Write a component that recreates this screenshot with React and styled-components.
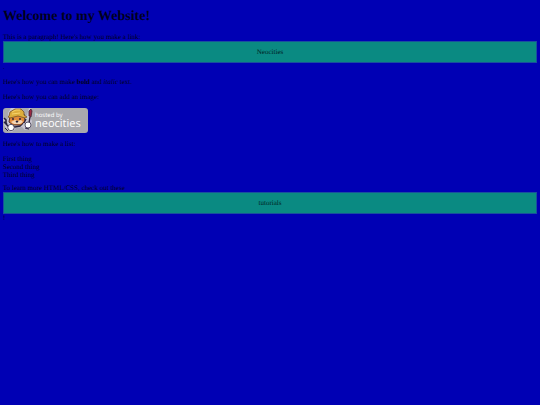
import React from "react";
import styled, { createGlobalStyle } from "styled-components";

const GlobalStyle = createGlobalStyle`
  body {
    margin: 0;
    background: #0000b4;
    color: #00001c;
    font: 7px/8px "Liberation Serif", "Times New Roman", serif;
    text-rendering: geometricPrecision;
  }
`;

const Page = styled.main`
  padding: 9px 3px;
`;

const Title = styled.h1`
  margin: 0 0 8px;
  font-size: 14px;
  line-height: 16px;
`;

const Paragraph = styled.p`
  margin: 0 0 7px;
`;

const BarLink = styled.a`
  display: block;
  box-sizing: border-box;
  padding: 6px;
  border: 1px solid #18509c;
  background: #0a8a82;
  color: #002426;
  line-height: 8px;
  text-align: center;
  text-decoration: none;
`;

const List = styled.ul`
  margin: 0 0 5px;
  padding: 0;
  list-style: none;
`;

const Badge = styled.svg`
  display: block;
  width: 85px;
  height: 25px;
  margin-bottom: 7px;
`;

const BadgeText = styled.text`
  fill: #fff;
  font-family: "Open Sans", "Noto Sans", sans-serif;
  font-size: ${({ $size }) => $size}px;
`;

function NeocitiesBadge() {
  return (
    <Badge viewBox="0 0 85 25" role="img" aria-label="Hosted by Neocities">
      <rect width="85" height="25" rx="3" fill="#a9a9ae" />
      <path d="M1 9 0 12l2 3-1 2 4 6 4 1 4-4 6-1 3 3 6-3 1-6-2-4 2-8-3-1-2 7-3 4 0-6-4-5-9 0-3 5 0 6-3 2Z" fill="#c8c5d2" />
      <path d="m1 10 2 2 0 4 3 3M1 14l3 2M7 18l5 1 5-1 3-3" fill="none" stroke="#26233f" strokeWidth="1.6" />
      <path d="m7 8-1 6 4 3 8 0 4-4-1-7-3-2-9 1Z" fill="#e28a3c" stroke="#573128" />
      <path d="m6 8 1-4 5-3 6 0 3 3 0 3 3 2-2 1-7-2-8 2-2-1Z" fill="#ddae3c" stroke="#765225" strokeWidth=".8" />
      <path d="m9 4 4-2 4 0M9 6l8-1" fill="none" stroke="#f6d36c" />
      <path d="m8 14 4-2 3 1 3-1 2 2-3 2-6 0Z" fill="#f3d5b3" />
      <path d="M10 10v2m7-2v2m-4 1 1 1 1-1" fill="none" stroke="#252039" strokeWidth="1.4" />
      <path d="m26 8 0-5 2-2 1 2-1 6Z" fill="#9d2841" stroke="#3e2034" strokeWidth=".8" />
      <path d="m27 9-1 6M23 11l-2 4" stroke="#34253e" strokeWidth="1.4" />
      <circle cx="8" cy="19.5" r="3.2" fill="#fff" stroke="#49445a" strokeWidth=".9" />
      <circle cx="25" cy="17" r="3" fill="#fff" stroke="#49445a" strokeWidth=".9" />
      <path d="m2 20 3 3M22 20l4 1" stroke="#292342" />
      <BadgeText x="32" y="9" $size={6}>hosted by</BadgeText>
      <BadgeText x="32" y="19" $size={11}>neocities</BadgeText>
    </Badge>
  );
}

export default function App() {
  return (
    <>
      <GlobalStyle />
      <Page>
        <Title>Welcome to my Website!</Title>
        <Paragraph>
          This is a paragraph! Here's how you make a link:{" "}
          <BarLink href="#neocities">Neocities</BarLink>.
        </Paragraph>
        <Paragraph>
          Here's how you can make <strong>bold</strong> and <em>italic</em> text.
        </Paragraph>
        <Paragraph>Here's how you can add an image:</Paragraph>
        <NeocitiesBadge />
        <Paragraph>Here's how to make a list:</Paragraph>
        <List>
          <li>First thing</li>
          <li>Second thing</li>
          <li>Third thing</li>
        </List>
        <Paragraph>
          To learn more HTML/CSS, check out these{" "}
          <BarLink href="#tutorials">tutorials</BarLink>!
        </Paragraph>
      </Page>
    </>
  );
}
